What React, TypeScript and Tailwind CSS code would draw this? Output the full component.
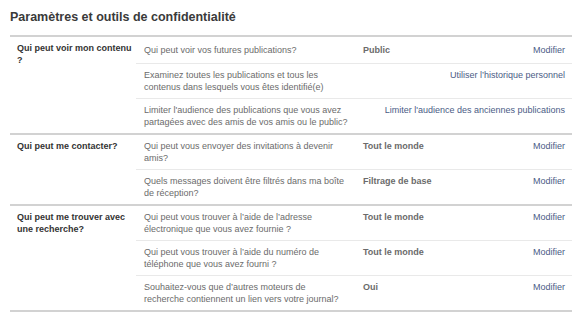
import React from "react";

type Row = {
  question: string;
  value?: string;
  link: string;
  pad?: string;
};

type Section = {
  label: string;
  rows: Row[];
};

const sections: Section[] = [
  {
    label: "Qui peut voir mon contenu ?",
    rows: [
      {
        question: "Qui peut voir vos futures publications?",
        value: "Public",
        link: "Modifier",
        pad: "py-[7px]",
      },
      {
        question:
          "Examinez toutes les publications et tous les contenus dans lesquels vous êtes identifié(e)",
        link: "Utiliser l’historique personnel",
      },
      {
        question:
          "Limiter l'audience des publications que vous avez partagées avec des amis de vos amis ou le public?",
        link: "Limiter l'audience des anciennes publications",
      },
    ],
  },
  {
    label: "Qui peut me contacter?",
    rows: [
      {
        question: "Qui peut vous envoyer des invitations à devenir amis?",
        value: "Tout le monde",
        link: "Modifier",
      },
      {
        question: "Quels messages doivent être filtrés dans ma boîte de réception?",
        value: "Filtrage de base",
        link: "Modifier",
      },
    ],
  },
  {
    label: "Qui peut me trouver avec une recherche?",
    rows: [
      {
        question:
          "Qui peut vous trouver à l’aide de l’adresse électronique que vous avez fournie ?",
        value: "Tout le monde",
        link: "Modifier",
      },
      {
        question: "Qui peut vous trouver à l’aide du numéro de téléphone que vous avez fourni ?",
        value: "Tout le monde",
        link: "Modifier",
      },
      {
        // wraps one word earlier than our font would
        question:
          "Souhaitez-vous que d’autres moteurs de\nrecherche contiennent un lien vers votre journal?",
        value: "Oui",
        link: "Modifier",
      },
    ],
  },
];

function SettingRow({ row, last }: { row: Row; last: boolean }) {
  return (
    <div
      className={`flex pl-[8px] pr-[7px] ${row.pad ?? "py-[5px]"} ${
        last ? "" : "border-b border-[#e9e9e9]"
      }`}
    >
      <div className="w-[205px] shrink-0 whitespace-pre-line text-[#6b6b6b]">{row.question}</div>
      {row.value ? (
        <>
          <div className="ml-[14px] flex-1 font-bold text-[#6b6b6b]">{row.value}</div>
          <a href="#" className="text-[#4b5c86]">
            {row.link}
          </a>
        </>
      ) : (
        <div className="ml-[14px] flex-1 text-right">
          <a href="#" className="text-[#4b5c86]">
            {row.link}
          </a>
        </div>
      )}
    </div>
  );
}

export default function App() {
  return (
    <div
      className="w-[576px] h-[328px] bg-white pl-[10px] pr-[4px] pt-[9px] text-[9px] leading-[12px]"
      style={{ fontFamily: '"Liberation Sans", Arial, sans-serif' }}
    >
      <h1 className="text-[12.5px] leading-[16px] font-bold text-[#3a3a3a] mb-[10px]">
        Paramètres et outils de confidentialité
      </h1>

      <div className="border-b-2 border-[#d2d2d2]">
        {sections.map((section) => (
          <div key={section.label} className="flex border-t-2 border-[#d2d2d2]">
            {/* Section label */}
            <div className="w-[126px] shrink-0 pl-[7px] pr-[4px] pt-[5px] font-bold text-[#333]">
              {section.label}
            </div>
            {/* Rows */}
            <div className="flex-1">
              {section.rows.map((row, i) => (
                <SettingRow key={row.question} row={row} last={i === section.rows.length - 1} />
              ))}
            </div>
          </div>
        ))}
      </div>
    </div>
  );
}
